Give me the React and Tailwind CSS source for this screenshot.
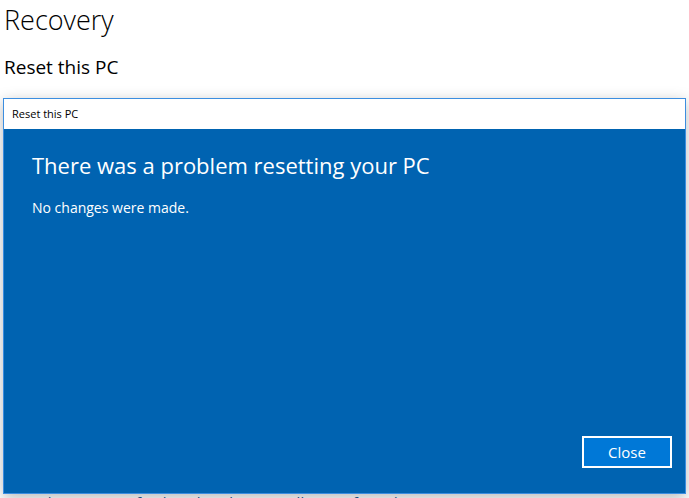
import { useState } from 'react';

const App = () => {
    const [open, setOpen] = useState(true);

    return (
        <div className="relative w-[689px] h-[498px] overflow-hidden bg-white font-['Open_Sans','Noto_Sans',sans-serif]">
            {/* Settings page behind the dialog */}
            <div className="pl-[4px]">
                <h1 className="text-[27px] leading-[40px] font-light text-black">Recovery</h1>
                <h2 className="mt-[13px] text-[19px] leading-[28px] text-black">Reset this PC</h2>
                <a href="#" className="block mt-[411px] text-[15px] leading-[20px] text-[#1e5b94]">
                    Learn how to start fresh with a clean installation of Windows
                </a>
            </div>

            {/* Reset dialog */}
            {open && (
                <div className="absolute left-[3px] top-[98px] w-[683px] h-[396px] flex flex-col border border-[#3c8ee0] bg-[#0063b1] shadow-[0_4px_14px_rgba(0,0,0,0.28)]">
                    <div className="h-[30px] shrink-0 bg-white flex items-center pl-[8px]">
                        <span className="text-[11px] text-black">Reset this PC</span>
                    </div>
                    <div className="flex-1 flex flex-col px-[28px] pt-[19px] pb-[25px]">
                        <h3 className="text-[22px] leading-[34px] text-white">There was a problem resetting your PC</h3>
                        <p className="mt-[16px] text-[14px] leading-[20px] text-white">No changes were made.</p>
                        <div className="mt-auto flex justify-end">
                            <button
                                onClick={() => setOpen(false)}
                                className="w-[90px] h-[32px] border-2 border-white bg-[#0078d7] text-[15px] text-white mr-[-15px]"
                            >
                                Close
                            </button>
                        </div>
                    </div>
                </div>
            )}
        </div>
    );
};

export default App;
